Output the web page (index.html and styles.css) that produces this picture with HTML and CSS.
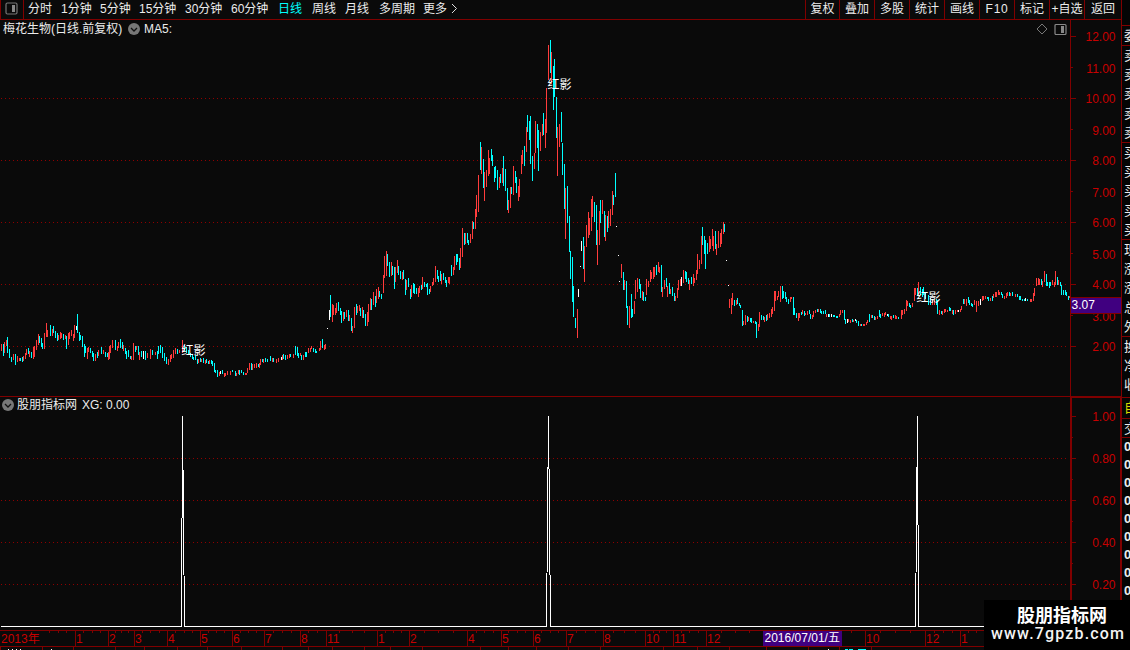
FILE: index.html
```html
<!DOCTYPE html>
<html lang="zh-CN">
<head>
<meta charset="utf-8">
<title>梅花生物</title>
<link rel="stylesheet" href="styles.css">
</head>
<body>
<div class="terminal">
  <div class="workspace">
    <header class="toolbar">
      <div class="panel-toggle"><svg width="13" height="13" viewBox="0 0 13 13"><rect x="1" y="1" width="11" height="11" rx="1.5" fill="none" stroke="#777" stroke-width="1.2"/><rect x="7" y="3" width="3" height="7" fill="#888"/></svg></div>
      <nav class="periods">
        <span>分时</span><span>1分钟</span><span>5分钟</span><span>15分钟</span><span>30分钟</span><span>60分钟</span><span class="active">日线</span><span>周线</span><span>月线</span><span>多周期</span><span>更多</span>
        <svg width="7" height="11" viewBox="0 0 7 11"><path d="M1 1l4.5 4.5L1 10" fill="none" stroke="#ddd"/></svg>
      </nav>
      <nav class="actions">
        <span>复权</span><span>叠加</span><span>多股</span><span>统计</span><span>画线</span><span class="spaced">F10</span><span>标记</span><span>+自选</span><span>返回</span>
      </nav>
    </header>
    <section class="price-panel">
      <div class="plot">
        <svg class="canvas" id="price" width="1070" height="376" viewBox="0 20 1070 376"></svg>
        <div class="caption">
          <span>梅花生物(日线.前复权)</span>
          <svg class="knob" width="12" height="12" viewBox="0 0 12 12"><circle cx="6" cy="6" r="6" fill="#777"/><path d="M3 5l3 3 3-3" fill="none" stroke="#111" stroke-width="1.3"/></svg>
          <span>MA5:</span>
          <div class="tools">
            <svg width="12" height="12" viewBox="0 0 12 12"><path d="M6 1l5 5-5 5-5-5z" fill="none" stroke="#777"/></svg>
            <svg width="13" height="13" viewBox="0 0 13 13"><rect x="1" y="1.5" width="11" height="10" rx="1" fill="none" stroke="#888" stroke-width="1.2"/><rect x="7" y="3" width="3" height="7" fill="#888"/></svg>
          </div>
        </div>
      </div>
      <svg class="scale" id="price-scale" width="52" height="376" viewBox="1070 20 52 376"></svg>
    </section>
    <section class="signal-panel">
      <div class="plot">
        <svg class="canvas" id="signal" width="1070" height="234" viewBox="0 396 1070 234"></svg>
        <div class="caption signal-caption">
          <svg class="knob" width="12" height="12" viewBox="0 0 12 12"><circle cx="6" cy="6" r="6" fill="#777"/><path d="M3 5l3 3 3-3" fill="none" stroke="#111" stroke-width="1.3"/></svg>
          <span>股朋指标网</span><span>XG: 0.00</span>
        </div>
      </div>
      <svg class="scale" id="signal-scale" width="52" height="234" viewBox="1070 396 52 234"></svg>
    </section>
    <svg class="timeline" id="timeline" width="1122" height="20" viewBox="0 630 1122 20"></svg>
  </div>
  <aside class="quotes">
    <div class="cell first"></div>
    <div class="cell c1"><b>委</b></div>
    <div class="cell c5"><b>卖</b><b>卖</b><b>卖</b><b>卖</b><b>卖</b></div>
    <div class="cell c5"><b>买</b><b>买</b><b>买</b><b>买</b><b>买</b></div>
    <div class="cell c5"><b>现</b><b>涨</b><b>涨</b><b>总</b><b>外</b></div>
    <div class="cell c3"><b>换</b><b>净</b><b>收</b></div>
    <div class="cell tab"><b>自</b></div>
    <div class="cell trade"><b>交</b></div>
    <div class="cell ticks"><b>0</b><b>0</b><b>0</b><b>0</b><b>0</b><b>0</b><b>0</b><b>0</b><b>0</b></div>
  </aside>
  <div class="watermark"><strong>股朋指标网</strong><svg width="146" height="22"><text class="site" x="7" y="13" textLength="133">www.7gpzb.com</text></svg></div>
</div>
<script src="chart.js"></script>
</body>
</html>
```
FILE: styles.css
```css
* { box-sizing: border-box; }
body { margin: 0; background: #0a0a0a; overflow: hidden; }
.terminal {
  position: relative; display: grid; grid-template-columns: 1122px 8px;
  width: 1130px; height: 650px; overflow: hidden; color: #ececec;
  font: 12px/18px "Liberation Sans", "Noto Sans CJK SC", sans-serif;
}
svg { display: block; }
.workspace { display: flex; flex-direction: column; height: 650px; }
.toolbar { display: flex; height: 20px; border-bottom: 1px solid #800000; border-right: 1px solid #800000; white-space: nowrap; line-height: 19px; }
.panel-toggle { width: 24px; padding: 2px 0 0 4px; border-right: 1px solid #800000; border-left: 1px solid #800000; }
.periods { display: grid; grid-template-columns: 33px 39px 39px 46px 46px 47px 34px 33px 34px 44px 28px 8px; padding-left: 4px; }
.periods svg { margin-top: 3px; }
.active { color: #00ffff; }
.actions { display: grid; grid-template-columns: 34px repeat(7, 35px) 37px; margin-left: auto; text-align: center; }
.actions span { border-left: 1px solid #800000; height: 19px; }
.spaced { letter-spacing: .7px; }
.price-panel, .signal-panel { display: flex; }
.plot { display: grid; width: 1070px; }
.canvas, .caption { grid-area: 1 / 1; }
.caption { display: flex; align-items: center; gap: 5px; height: 18px; padding-left: 3px; white-space: nowrap; line-height: 19px; }
.caption > span:first-child { width: 120px; }
.caption > .knob + span { margin-left: -1px; }
.tools { display: flex; align-items: center; gap: 6px; margin-left: auto; padding-right: 3px; }
.signal-caption { padding-left: 2px; gap: 4px; line-height: 18px; }
.canvas { overflow: hidden; }
.signal-caption span { margin-right: 1px; }
.plot text, .scale text, .timeline text { font: 12px "Liberation Sans", "Noto Sans CJK SC", sans-serif; }
.red { stroke: #ff3c3c; }
.cyan { stroke: #00ffff; }
.white { stroke: #fff; }
.dots { stroke: #900000; stroke-dasharray: 1 3; }
.frame { stroke: #800000; }
.label { fill: #c80000; }
.bright { fill: #fff; }
.highlight { fill: #400080; }
.quotes { background: #050505; overflow: hidden; }
.cell { border-bottom: 1px solid #800000; padding-left: 2px; display: flex; flex-direction: column; overflow: hidden; width: 8px; }
.cell b { display: block; width: 13px; font-weight: 400; line-height: 19.2px; flex: none; height: 19.2px; font-size: 13px; }
.first { height: 26px; }
.c1 { height: 20px; }
.c5 { height: 97px; }
.c3 { height: 61px; }
.tab { height: 21px; color: #d8d800; }
.trade { height: 19px; }
.ticks { border: 0; }
.ticks b { height: 18px; line-height: 18px; font-weight: 700; }
.watermark { position: absolute; left: 984px; top: 600px; width: 146px; height: 50px; background: #000; color: #fff; }
.watermark strong { display: block; margin-left: 33px; padding-top: 3px; font: 700 18px/23px "Noto Sans CJK SC", sans-serif; }
.site { font: 500 16px Roboto, sans-serif; fill: #f4f4f4; }
```
FILE: chart.js
```javascript
// Bar runs: origin in pixels, then colour + x,top,bottom in thirds of a pixel.
const runs = [
  [0, 290, `r5,162,183 c9,162,198 r13,156,189 r19,150,168 c22,141,189 c28,177,204 c34,201,216 r40,192,210 c46,192,225 r52,198,216 r58,204,213 c61,204,213 c67,201,216 r70,198,213 r76,189,207 r79,177,195 c85,174,192 r88,183,201 c94,186,204 r100,171,207 r103,168,201 r109,150,180 r115,132,165 c118,138,159 c124,144,171 c127,159,177 r133,129,177 r139,99,141 r142,120,141 c151,105,138 r157,117,138 c160,108,129 c166,123,144 c172,129,153 r175,135,150 r181,126,147 r184,129,144 c190,132,150 r196,135,147 c199,138,177 r205,129,165 r208,126,147 r214,120,138 r220,132,153 r223,105,144 w229,108,120 c232,72,129 c238,126,153 c241,135,150 c247,138,171 c253,162,201 c256,168,189 r262,174,207 r265,171,186 c271,174,189 c277,183,201 c280,189,213 r286,192,213 c292,186,204 r295,180,198 c304,171,192 r310,180,192 c316,186,201 c322,189,201 r325,186,210 r328,168,207 r331,165,189 r337,150,174 c346,150,180 r352,168,183 r355,156,174 c361,147,174 c367,156,177 r370,165,183 c376,174,192 c379,183,207 c385,180,201 c391,198,207 r394,198,210 r400,159,210 c406,168,186 r409,168,180 c415,168,195 r418,186,210 c424,183,201 w430,183,207 c436,183,210 r442,189,204 r451,177,207 c457,180,195 r466,186,195 c472,183,207 c475,168,192 c481,165,189 c487,171,204 c493,189,213 c499,201,222 r505,207,225 r511,195,216 r514,192,207 r520,180,204 r526,174,192 c532,177,192 r538,180,189 r547,150,189 c553,165,183 c559,171,189 c565,180,195 c571,189,201 c577,192,207 c580,201,210 c586,195,210 c592,207,222 r595,207,219 c601,204,216 r604,207,216 c610,204,219 r616,210,222 c619,207,219 c625,213,222 r628,210,222 c634,210,222 c637,213,228 c643,219,246 c646,240,249 c652,240,261 r658,246,258 w661,243,252 c667,240,252 r673,249,261 r676,249,258 r682,243,255 r691,243,255 c697,240,246 c706,243,258 r709,249,258 r715,240,252 c718,240,255 c724,240,249 c730,246,255 r736,249,255 r739,249,255 r742,234,249 r748,219,240 c754,219,240 r757,222,240 r763,222,234 r769,219,234 c775,222,231 r778,219,234 r781,207,225 c787,207,216 r790,207,219 c796,204,216 c802,207,216 c811,198,213 r817,204,216 c820,204,216 r829,207,219 r835,204,216 w844,201,210 r847,195,210 c850,192,207 c856,195,210 r862,195,207 r868,192,204 c871,192,201 r880,192,204 c886,168,195 c892,171,198 c895,189,204 r901,189,198 c904,195,210 r910,195,210 c916,186,201 c919,186,201 r925,174,189 r931,174,186 r934,168,177 c940,174,186 c946,177,189 c949,183,189 r958,174,183`],
  [320, 220, `r1,363,390 c7,357,384 r13,375,390 r16,372,387 w22,324,327 w28,270,300 c31,225,291 r37,252,306 r40,255,285 r46,264,285 r49,249,279 c55,246,273 c61,264,285 c64,273,309 r70,276,303 c73,276,297 r79,270,291 c85,270,303 r88,285,303 c94,294,333 r97,318,339 r103,261,324 c109,252,285 r112,258,279 r118,255,273 c121,264,288 r127,261,294 c130,270,294 c136,282,318 r142,276,318 r145,252,306 r151,234,270 c154,237,270 r160,216,255 c166,228,261 r169,207,249 r175,201,237 c178,213,231 c184,222,237 r190,165,219 r193,108,174 r199,93,168 c202,102,138 c208,126,171 r214,126,168 c217,138,165 c223,141,207 r226,141,186 r232,120,159 c235,138,165 c241,153,177 r247,156,180 c250,150,177 c256,177,225 r259,180,210 c265,174,201 c271,207,237 r274,195,231 c280,189,219 c283,192,222 c289,204,222 r295,204,231 r298,198,219 c304,195,210 r307,171,207 c313,186,201 c319,192,201 c322,189,225 c328,207,222 r331,198,216 r337,186,198 r340,174,195 r346,138,186 c352,150,177 c355,168,186 c361,153,183 r364,162,192 c370,159,180 c376,171,189 c379,180,201 r385,171,189 r388,171,192 c394,135,168 r400,141,165 r403,108,150 c409,102,135 c412,102,126 c418,114,150 r421,84,144 r427,24,111 c433,39,75 r436,39,72 c442,39,69 c445,60,75 r451,42,69 r457,3,57 c460,6,27 r466,0,27`],
  [440, 30, `r97,573,627 c100,576,597 r106,537,597 r109,495,561 r115,435,546 c121,336,420 r124,351,432 c130,387,474 r133,426,513 r139,420,471 r145,360,438 r148,384,432 c154,357,393 c157,375,408 c163,411,456 c166,408,444 c172,420,480 r178,441,474 c181,432,459 r187,414,459 c190,378,468 c196,417,483 c202,474,540 r205,510,549 r211,471,534 c214,471,492 r220,408,495 c226,423,459 c229,441,489 r235,468,513 r238,447,501 r244,375,432 r247,360,402 c253,348,408 r259,291,366 c262,255,306 c268,273,330 c271,258,402 c277,378,453 r283,369,417 r286,273,369 c292,282,354 c295,300,423 r301,306,363 r307,282,318 c310,249,315 r316,267,354 r319,174,309 r325,45,150 c331,30,129 r334,66,162 c340,108,240 c343,87,201 c349,201,324 r352,291,438 r358,282,351 c364,246,336 c367,339,435 c373,402,537`],
  [540, 170, `r76,54,207 c82,48,159 c88,138,246 c91,243,327 c97,261,396 c100,348,441 c106,444,474 r112,417,504 w115,357,381 w121,288,291 w124,213,243 c130,201,297 r133,228,336 r139,165,231 r145,126,204 r148,144,195 r154,87,183 r157,78,141 c163,96,156 c169,105,225 r172,180,285 r178,123,225 c181,90,159 r187,90,132 c193,123,201 r196,135,213 c202,138,186 r205,123,174 r211,117,168 r217,63,135 c220,75,105 c226,9,81 w229,168,171 w235,255,258 w238,333,336 r244,282,324 c250,306,360 r253,330,360 c259,333,414 c262,408,465 r268,408,474 c274,372,444 c277,417,441 r283,393,432 r286,330,387 r292,324,366 c298,327,357 c301,342,384 r307,363,390 c310,366,393 c316,381,393 r319,327,375 r325,333,351 r331,300,336 r334,306,327 r340,291,327 r343,291,321 c349,285,315 r355,276,306 r358,291,309 c364,285,366 r367,351,381 r373,330,357 c379,324,351 r382,348,381 c388,339,372 r391,357,372 c397,351,378 c403,369,393 r406,378,393 r412,354,384 r415,330,360 r421,327,348 w424,321,348 r430,300,339 c436,303,327 c439,306,336 c445,324,342 r448,330,360 c454,321,342 r460,312,348 r463,324,339 r469,300,330 r472,252,312 r478,270,297 r484,198,282 c487,171,225 c493,198,252 c496,210,297 c502,219,252 r508,198,246 r511,207,237 r517,177,228 r520,198,243 c526,183,237 r529,222,255 r535,183,234 r541,189,231 r544,177,222 r550,156,192 c553,162,186 w559,270,273 w565,345,348 r568,387,414 r574,384,432 r577,369,405 c583,390,408 r589,390,405 c592,384,402 c598,399,408 c601,405,414 c607,420,468 r610,453,465 r616,435,465 c622,438,456 r625,441,453 c631,444,456 c634,444,459 r640,453,459 c646,453,462 c649,456,504 r655,462,483`],
  [740, 260, `c1,135,144 r57,156,201 c64,165,180 c70,168,180 r73,171,186 c79,165,183 r82,162,180 r88,159,174 r94,147,171 r97,141,162 r103,93,153 r106,93,123 r112,108,120 r115,93,111 r121,78,126 c127,78,117 c130,93,114 c136,96,117 c139,111,126 c145,117,132 r151,111,126 r154,111,117 c160,111,165 c163,144,165 c169,159,174 r175,159,183 r178,159,174 c184,156,165 r187,150,162 c193,153,168 r196,159,165 r202,153,165 c208,150,162 c211,162,177 r217,165,177 r220,153,171 r226,150,159 c232,147,156 r235,147,156 c241,147,159 c244,153,162 c250,153,162 c256,150,162 r259,162,171 w265,162,171 c268,162,171 w274,162,171 c280,165,171 c283,165,171 c289,168,174 c292,168,174 r298,162,171 r301,150,165 r307,150,159 c313,150,180 c316,177,192 w322,177,189 r325,177,186 r331,180,189 c337,177,186 r340,180,186 w346,177,183 c349,180,189 c355,183,198 r361,192,198 c364,192,198 r370,192,198 r373,192,198 r379,186,195 r382,180,189 c388,162,186 r394,165,174 c397,165,174 c403,168,180 r406,171,180 r412,168,177 c418,150,171 c421,162,174 r427,159,168 r433,159,171 r436,156,165 w442,162,168 c445,162,171 r451,168,177 r454,168,180 c460,165,174 r466,165,177 r469,168,177 c475,171,177 r484,150,177 r487,150,165 r493,147,162 r499,120,153 r502,123,138 c508,129,141 c511,135,144 r517,129,141 r523,84,123 r526,84,105 c532,84,108 r535,66,105 c541,81,105 c547,87,111 c550,81,105 c556,96,117 c565,105,135 c571,114,135 r577,117,135 r583,120,135 c589,117,135 c592,120,162 r598,150,165 c604,153,162 r607,153,165 r613,147,159 r616,147,156 r622,150,156 c628,141,153 c631,144,153 r637,150,162 c640,150,165 r646,150,162 r652,150,156 w655,150,156 r661,147,156 r664,138,150 c670,117,132 r673,117,132 r679,117,138 c685,111,129 c688,120,135 c694,129,138 c697,132,141 r703,120,135 r709,123,156 r715,123,138 w721,117,135 r727,108,123 r730,108,120 r736,108,117 c742,111,117 c745,111,123 r751,114,123 c757,108,123 r760,102,114 r766,96,111 r769,96,111 r775,90,105 r778,96,105 c784,96,105 c787,102,114 r793,108,117 r799,99,114 r802,96,108 c808,96,108 r811,99,108 c817,96,108 r826,102,111 c832,102,111 c838,108,120 c841,108,120 c847,117,123 c853,117,123 w856,114,123 c862,117,123 r871,117,126 r874,117,126 r880,99,123 r883,84,108 r889,54,78 r895,54,75 r898,57,75 c904,57,75 r907,63,81 r913,33,66 c919,42,78 c922,66,78 c928,66,84 c931,66,78 r937,60,75 r943,66,81 r946,33,75 c952,51,75 r955,60,75 c961,66,78 c964,75,105 c970,90,105 c976,90,105 c979,96,108 c985,108,120 r988,108,114`]
];
const path = (cls, d) => `<path class="${cls}" fill="none" d="${d}"/>`;
const text = (cls, x, y, s, anchor) => `<text class="${cls}" x="${x}" y="${y}"${anchor ? ` text-anchor="${anchor}"` : ''}>${s}</text>`;
const grid = ys => path('dots', ys.map(y => `M1 ${y + .5}H1067`).join(''));
const put = (id, html) => { document.getElementById(id).innerHTML = html; };

const bars = { r: '', c: '', w: '' };
for (const [ox, oy, list] of runs) {
  for (const item of list.split(' ')) {
    const [x, top, bottom] = item.slice(1).split(',').map(Number);
    bars[item[0]] += `M${ox + Math.floor(x / 3) + .5} ${oy + Math.round(top / 3)}V${oy + Math.round(bottom / 3)}`;
  }
}
put('price', grid([98, 160, 222, 284, 346]) + path('red', bars.r) + path('cyan', bars.c) + path('white', bars.w) +
  [[181.5, 354.5], [547.5, 88.5], [916.5, 301.5]].map(([x, y]) => text('bright', x, y, '红影')).join(''));

let scale = path('frame', 'M1070.5 20V396M1121.5 20V396');
for (let v = 12; v >= 2; v--) {
  const y = 36 + (12 - v) * 31, minor = v % 2;
  scale += path('frame', `M1071 ${y + .5}h${minor ? 2 : 5}`) + text('label', 1115.5, y + (minor ? 6 : 5), v + '.00', 'end');
}
scale += '<rect class="highlight" x="1071" y="297" width="50" height="17"/>' + path('frame', 'M1071 297.5h50M1071 313.5h50') + text('bright', 1071.5, 309, '3.07');
put('price-scale', scale);

put('signal', path('frame', 'M0 396.5H1070') + grid([458, 500, 542, 584]) +
  `<g shape-rendering="crispEdges">${path('white', 'M1 626.5H181.5L182.5 416L184.5 626.5H546.5L548.5 416L550.5 626.5H915.5L917.5 416L918.5 626.5H1070')}</g>`);
scale = path('frame', 'M1070 396.5H1122M1070 397.5H1122M1070.5 396V630M1071.5 396V630M1120.5 396V630M1121.5 396V630');
['1.00', '0.80', '0.60', '0.40', '0.20'].forEach((s, i) => {
  const y = 416 + i * 42;
  scale += path('frame', `M1072 ${y + .5}h4M1072 ${y + 21.5}h1`) + text('label', 1115.5, y + 5, s, 'end');
});
put('signal-scale', scale);

const months = [[0, '2013年'], [75, 1], [108, 2], [134, 3], [167, 4], [200, 5], [232, 6], [264, 7], [300, 8], [326, 11], [377, 1], [409, 2], [467, 4], [501, 5], [533, 6], [566, 7], [603, 8], [645, 10], [673, 11], [706, 12], [865, 10], [925, 12], [960, 1]];
const weeks = [49, 58, 66, 83, 92, 100, 115, 121, 128, 142, 150, 159, 175, 184, 192, 208, 216, 224, 240, 248, 256, 273, 282, 291, 308, 317, 339, 352, 364, 385, 393, 401, 424, 438, 453, 476, 484, 493, 508, 517, 525, 541, 550, 558, 576, 585, 595, 613, 624, 635, 653, 659, 666, 681, 689, 698, 721, 735, 749, 851, 880, 895, 910, 934, 943, 952, 968, 976];
const lower = [0, 42, 73, 115, 144, 177, 207, 241, 282, 308, 332, 364, 390, 422, 480, 508, 536, 568, 600, 663, 697, 729, 766, 808, 839, 871];
put('timeline', path('frame', 'M0 630.5H1122M0 646.5H1122' + months.map(([x]) => x ? `M${x + .5} 631V646` : '').join('') +
    weeks.map(x => `M${x + .5} 631v2`).join('') + lower.map(x => `M${x + .5} 647v3`).join('')) +
  months.map(([x, s]) => text('label', x + 1, 643, s)).join('') +
  '<rect class="highlight" x="763" y="631" width="79" height="15"/>' + text('bright', 764.5, 642, '2016/07/01/五') +
  path('white', 'M8.5 649v1M12.5 649v1M16.5 649v1M20.5 649v1M51.5 649v1M828.5 649v1') + path('cyan', 'M845 649.5h3M849 649.5h4M858 649.5h8'));
```
